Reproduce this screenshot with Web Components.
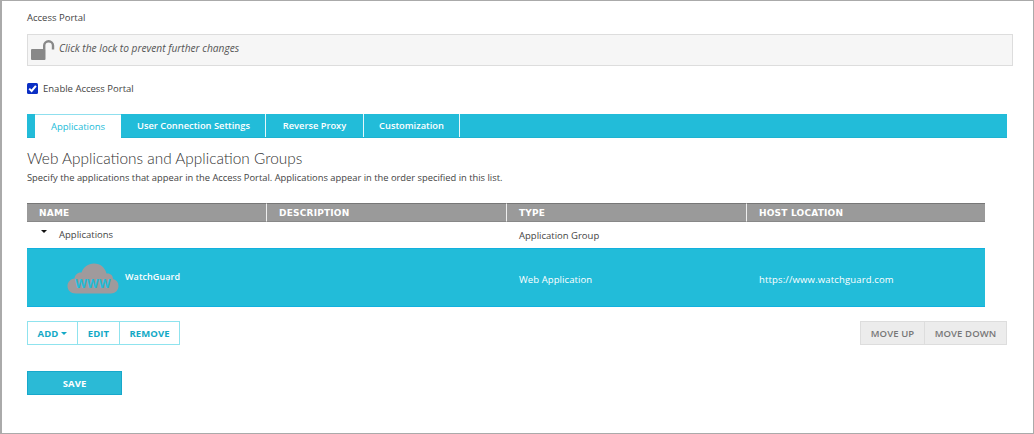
<!DOCTYPE html>
<html>
<head>
<meta charset="utf-8">
<title>Access Portal</title>
<style>
html, body { margin: 0; padding: 0; background: #fff; }
body { font-family: "Open Sans", "Liberation Sans", sans-serif; font-size: 9.5px; color: #444; }
</style>
</head>
<body>
<wg-page>
  <wg-lockbar>Click the lock to prevent further changes</wg-lockbar>
  <wg-check>Enable Access Portal</wg-check>
  <wg-tabs></wg-tabs>
  <wg-apps></wg-apps>
</wg-page>

<script>
// Page frame
class WgPage extends HTMLElement {
    connectedCallback() {
        this.attachShadow({ mode: 'open' }).innerHTML = `<style>
            :host { display: flex; flex-direction: column; box-sizing: border-box; width: 1034px; height: 434px;
                    border: 1px solid #aaa; border-left-width: 2px; padding: 0 0 0 25px; overflow: hidden; }
            .title { height: 33px; line-height: 33px; }
        </style>
        <div class="title">Access Portal</div>
        <slot></slot>`;
    }
}

// Lock message
class WgLockbar extends HTMLElement {
    connectedCallback() {
        this.attachShadow({ mode: 'open' }).innerHTML = `<style>
            :host { display: flex; align-items: center; box-sizing: border-box; width: 986px; height: 32px; padding-bottom: 4px;
                    background: #f6f6f6; border: 1px solid #ddd; font-style: italic; font-size: 10.2px; color: #555; }
            svg { margin: 4px 3px 0 3px; flex: none; }
        </style>
        <svg width="25" height="22" viewBox="0 0 25 22">
            <rect x="0" y="10" width="14.500" height="11" rx="1" fill="#888"/>
            <path d="M13.200 10.500V6.600a4.400 4.400 0 0 1 8.800 0V10.500" fill="none" stroke="#888" stroke-width="2.400"/>
        </svg>
        <slot></slot>`;
    }
}

// Checkbox row
class WgCheck extends HTMLElement {
    connectedCallback() {
        this.attachShadow({ mode: 'open' }).innerHTML = `<style>
            :host { display: flex; align-items: center; height: 12px; margin-top: 16px; }
            svg { flex: none; margin-right: 5px; }
        </style>
        <svg width="11" height="11" viewBox="0 0 11 11">
            <rect width="11" height="11" rx="1.500" fill="#0b2fc4"/>
            <path d="M2.200 5.600 4.600 8 8.900 2.800" fill="none" stroke="#fff" stroke-width="2"/>
        </svg>
        <slot></slot>`;
    }
}

// Tab bar
const tabs = [
    { label: 'Applications', width: 86, active: true },
    { label: 'User Connection Settings', width: 144 },
    { label: 'Reverse Proxy', width: 98 },
    { label: 'Customization', width: 96 }
];

class WgTabs extends HTMLElement {
    connectedCallback() {
        const root = this.attachShadow({ mode: 'open' });
        root.innerHTML = `<style>
            :host { display: flex; box-sizing: border-box; width: 980px; height: 24px; margin-top: 20px;
                    padding-left: 8px; background: #22bcd9; border-bottom: 1px solid #1fb2d0; }
            div { box-sizing: border-box; height: 23px; line-height: 24px; text-align: center; color: #fff;
                  font-weight: 600; font-size: 9.3px; border-right: 1px solid #e6f7fa; }
            .active { height: 24px; background: #fff; color: #22bcd9; font-weight: 400; font-size: 9.5px; border-right: 0;
                      border-top: 1px solid #8fdfee; margin-right: 1px; }
        </style>`;
        tabs.forEach(tab => {
            const el = document.createElement('div');
            el.textContent = tab.label;
            el.style.width = tab.width + 'px';
            if (tab.active) el.className = 'active';
            root.appendChild(el);
        });
    }
}

// Buttons
class WgButton extends HTMLElement {
    connectedCallback() {
        this.attachShadow({ mode: 'open' }).innerHTML = `<style>
            :host { display: flex; align-items: center; justify-content: center; box-sizing: border-box; height: 24px;
                    font-weight: 600; font-size: 9.5px; letter-spacing: 0.1px; }
            :host([kind=outline]) { background: #fff; color: #14a9c6; border: 1px solid #8fe3ee; font-weight: 700; }
            :host([kind=grey]) { background: #ececec; color: #777; border: 1px solid #ddd; }
            :host([kind=save]) { background: #2bbad6; color: #fff; border: 1px solid #17a8cb; font-weight: 700; }
            .caret { display: none; width: 0; height: 0; margin-left: 3px; border: 3px solid transparent;
                     border-top-color: #14a9c6; border-bottom: 0; }
            :host([caret]) .caret { display: block; }
        </style><slot></slot><span class="caret"></span>`;
    }
}

// Applications table section
const columns = ['Name', 'Description', 'Type', 'Host Location'];

class WgApps extends HTMLElement {
    connectedCallback() {
        this.attachShadow({ mode: 'open' }).innerHTML = `<style>
            :host { display: block; }
            h2 { margin: 10px 0 0; font: 300 15.400px/20px Lato, "Open Sans", sans-serif; color: #333; }
            p { margin: 3px 0 0; line-height: 14px; font-size: 9.350px; }
            .grid { display: grid; grid-template-columns: 240px 240px 240px 238px; width: 958px; margin-top: 18px; }
            .head { display: flex; align-items: center; box-sizing: border-box; height: 19px; padding-left: 12px; background: #9a9a9a;
                    border-top: 1px solid #777; border-bottom: 1px solid #888; border-right: 1px solid #eee;
                    color: #fff; font: 700 9px "DejaVu Sans", sans-serif; text-transform: uppercase; letter-spacing: 0.2px; }
            .head:nth-child(4) { border-right: 0; }
            .cell { display: flex; align-items: center; box-sizing: border-box; height: 26px; padding: 0 0 0 12px; }
            .first { padding: 0 0 1px 32px; position: relative; }
            .first::before { content: ""; position: absolute; left: 14px; top: 8px; border: 3px solid transparent;
                             border-top: 3px solid #111; border-bottom: 0; }
            .sel { height: 59px; padding: 4px 0 0 12px; background: #22bcd9; color: #fff;
                   border-top: 1px solid #12b0de; border-bottom: 1px solid #12b0de; letter-spacing: 0.08px; }
            .app { padding: 0 0 0 40px; gap: 6px; align-items: flex-start; }
            .app svg { margin-top: 13px; flex: none; }
            .app span { margin-top: 22px; font-weight: 600; font-size: 9px; line-height: 12px; }
            .url { letter-spacing: 0.15px; }
            .bar { display: flex; justify-content: space-between; width: 980px; margin-top: 14px; }
            .group { display: flex; }
            .save { margin-top: 26px; width: 95px; }
        </style>
        <h2>Web Applications and Application Groups</h2>
        <p>Specify the applications that appear in the Access Portal. Applications appear in the order specified in this list.</p>
        <div class="grid">
            ${columns.map(c => `<div class="head">${c}</div>`).join('')}
            <div class="cell first">Applications</div><div class="cell"></div>
            <div class="cell">Application Group</div><div class="cell"></div>
            <div class="cell sel app">
                <svg width="52" height="33" viewBox="0 0 52 32">
                    <path d="M9 31C3.500 31 .5 27.500 .5 23.500c0-4 3-7 7-7.500C8 12 11 9.500 14.500 10 16.500 4.500 21 1 27 1c6.500 0 11 4 12.500 10 4-.5 6.500 2 6.500 5.500 3.500 1 5.500 3.500 5.500 7C51.500 28 48 31 44 31Z" fill="#a09a9c"/>
                    <text x="26" y="25" text-anchor="middle" font-family="Open Sans, sans-serif" font-size="12" font-weight="700" letter-spacing="0.300" fill="#22bcd9">WWW</text>
                </svg>
                <span>WatchGuard</span>
            </div>
            <div class="cell sel"></div>
            <div class="cell sel">Web Application</div>
            <div class="cell sel url">https://www.watchguard.com</div>
        </div>
        <div class="bar">
            <div class="group">
                <wg-button kind="outline" caret style="width:51px">ADD</wg-button>
                <wg-button kind="outline" style="width:43px;margin-left:-1px">EDIT</wg-button>
                <wg-button kind="outline" style="width:61px;margin-left:-1px">REMOVE</wg-button>
            </div>
            <div class="group">
                <wg-button kind="grey" style="width:65px">MOVE UP</wg-button>
                <wg-button kind="grey" style="width:83px;margin-left:-1px">MOVE DOWN</wg-button>
            </div>
        </div>
        <wg-button class="save" kind="save">SAVE</wg-button>`;
    }
}

customElements.define('wg-page', WgPage);
customElements.define('wg-lockbar', WgLockbar);
customElements.define('wg-check', WgCheck);
customElements.define('wg-tabs', WgTabs);
customElements.define('wg-button', WgButton);
customElements.define('wg-apps', WgApps);
</script>
</body>
</html>
